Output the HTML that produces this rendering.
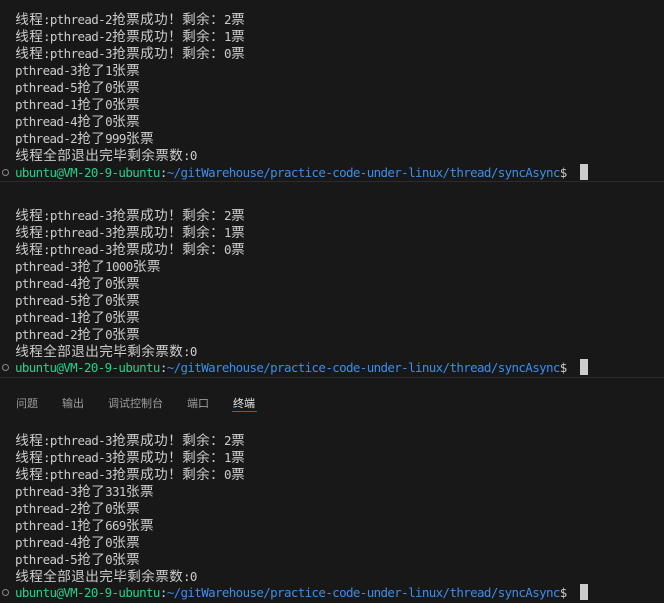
<!DOCTYPE html>
<html><head><meta charset="utf-8"><style>
html,body{margin:0;padding:0;background:#181818;width:664px;height:603px;overflow:hidden}
body{position:relative;font-family:"DejaVu Sans Mono","Noto Sans CJK SC",monospace;font-size:12.5px;letter-spacing:-0.63px;color:#cccccc}
.r{position:absolute;left:15px;height:17px;line-height:17px;white-space:pre}
.c{font-family:"Noto Sans CJK SC",sans-serif;font-size:13.6px;letter-spacing:0;display:inline-block;width:14px;text-align:center;}
.g{color:#23d18b}
.b{color:#3b8eea}
.cur{display:inline-block;width:8px;height:16px;background:#cccccc;vertical-align:-3px;margin-left:13px}
.dot{position:absolute;left:2px;width:5px;height:5px;border:1px solid #888;border-radius:50%}
.sep{position:absolute;left:0;width:664px;height:1px;background:#2b2b2b}
.tab{position:absolute;top:395px;font-family:"Noto Sans CJK SC",sans-serif;font-size:11px;letter-spacing:0;color:#9d9d9d;line-height:16px}
</style></head><body>

<div class="r" style="top:10px"><span class="c">线</span><span class="c">程</span>:pthread-2<span class="c">抢</span><span class="c">票</span><span class="c">成</span><span class="c">功</span><span class="c">！</span><span class="c">剩</span><span class="c">余</span><span class="c">：</span>2<span class="c">票</span></div>
<div class="r" style="top:27px"><span class="c">线</span><span class="c">程</span>:pthread-2<span class="c">抢</span><span class="c">票</span><span class="c">成</span><span class="c">功</span><span class="c">！</span><span class="c">剩</span><span class="c">余</span><span class="c">：</span>1<span class="c">票</span></div>
<div class="r" style="top:44px"><span class="c">线</span><span class="c">程</span>:pthread-3<span class="c">抢</span><span class="c">票</span><span class="c">成</span><span class="c">功</span><span class="c">！</span><span class="c">剩</span><span class="c">余</span><span class="c">：</span>0<span class="c">票</span></div>
<div class="r" style="top:61px">pthread-3<span class="c">抢</span><span class="c">了</span>1<span class="c">张</span><span class="c">票</span></div>
<div class="r" style="top:78px">pthread-5<span class="c">抢</span><span class="c">了</span>0<span class="c">张</span><span class="c">票</span></div>
<div class="r" style="top:95px">pthread-1<span class="c">抢</span><span class="c">了</span>0<span class="c">张</span><span class="c">票</span></div>
<div class="r" style="top:112px">pthread-4<span class="c">抢</span><span class="c">了</span>0<span class="c">张</span><span class="c">票</span></div>
<div class="r" style="top:129px">pthread-2<span class="c">抢</span><span class="c">了</span>999<span class="c">张</span><span class="c">票</span></div>
<div class="r" style="top:146px"><span class="c">线</span><span class="c">程</span><span class="c">全</span><span class="c">部</span><span class="c">退</span><span class="c">出</span><span class="c">完</span><span class="c">毕</span><span class="c">剩</span><span class="c">余</span><span class="c">票</span><span class="c">数</span>:0</div>
<div class="dot" style="top:169px"></div>
<div class="r" style="top:164px"><span class="g">ubuntu@VM-20-9-ubuntu</span>:<span class="b">~/gitWarehouse/practice-code-under-linux/thread/syncAsync</span>$<span class="cur"></span></div>
<div class="sep" style="top:181px"></div>

<div class="r" style="top:206px"><span class="c">线</span><span class="c">程</span>:pthread-3<span class="c">抢</span><span class="c">票</span><span class="c">成</span><span class="c">功</span><span class="c">！</span><span class="c">剩</span><span class="c">余</span><span class="c">：</span>2<span class="c">票</span></div>
<div class="r" style="top:223px"><span class="c">线</span><span class="c">程</span>:pthread-3<span class="c">抢</span><span class="c">票</span><span class="c">成</span><span class="c">功</span><span class="c">！</span><span class="c">剩</span><span class="c">余</span><span class="c">：</span>1<span class="c">票</span></div>
<div class="r" style="top:240px"><span class="c">线</span><span class="c">程</span>:pthread-3<span class="c">抢</span><span class="c">票</span><span class="c">成</span><span class="c">功</span><span class="c">！</span><span class="c">剩</span><span class="c">余</span><span class="c">：</span>0<span class="c">票</span></div>
<div class="r" style="top:257px">pthread-3<span class="c">抢</span><span class="c">了</span>1000<span class="c">张</span><span class="c">票</span></div>
<div class="r" style="top:274px">pthread-4<span class="c">抢</span><span class="c">了</span>0<span class="c">张</span><span class="c">票</span></div>
<div class="r" style="top:291px">pthread-5<span class="c">抢</span><span class="c">了</span>0<span class="c">张</span><span class="c">票</span></div>
<div class="r" style="top:308px">pthread-1<span class="c">抢</span><span class="c">了</span>0<span class="c">张</span><span class="c">票</span></div>
<div class="r" style="top:325px">pthread-2<span class="c">抢</span><span class="c">了</span>0<span class="c">张</span><span class="c">票</span></div>
<div class="r" style="top:342px"><span class="c">线</span><span class="c">程</span><span class="c">全</span><span class="c">部</span><span class="c">退</span><span class="c">出</span><span class="c">完</span><span class="c">毕</span><span class="c">剩</span><span class="c">余</span><span class="c">票</span><span class="c">数</span>:0</div>
<div class="dot" style="top:364px"></div>
<div class="r" style="top:359px"><span class="g">ubuntu@VM-20-9-ubuntu</span>:<span class="b">~/gitWarehouse/practice-code-under-linux/thread/syncAsync</span>$<span class="cur"></span></div>
<div class="sep" style="top:377px"></div>

<div class="tab" style="left:16px">问题</div>
<div class="tab" style="left:62px">输出</div>
<div class="tab" style="left:108px">调试控制台</div>
<div class="tab" style="left:187px">端口</div>
<div class="tab" style="left:233px;color:#e7e7e7">终端</div>
<div style="position:absolute;left:232px;top:411px;width:25px;height:1px;background:#0078d4"></div>

<div class="r" style="top:431px"><span class="c">线</span><span class="c">程</span>:pthread-3<span class="c">抢</span><span class="c">票</span><span class="c">成</span><span class="c">功</span><span class="c">！</span><span class="c">剩</span><span class="c">余</span><span class="c">：</span>2<span class="c">票</span></div>
<div class="r" style="top:448px"><span class="c">线</span><span class="c">程</span>:pthread-3<span class="c">抢</span><span class="c">票</span><span class="c">成</span><span class="c">功</span><span class="c">！</span><span class="c">剩</span><span class="c">余</span><span class="c">：</span>1<span class="c">票</span></div>
<div class="r" style="top:465px"><span class="c">线</span><span class="c">程</span>:pthread-3<span class="c">抢</span><span class="c">票</span><span class="c">成</span><span class="c">功</span><span class="c">！</span><span class="c">剩</span><span class="c">余</span><span class="c">：</span>0<span class="c">票</span></div>
<div class="r" style="top:482px">pthread-3<span class="c">抢</span><span class="c">了</span>331<span class="c">张</span><span class="c">票</span></div>
<div class="r" style="top:499px">pthread-2<span class="c">抢</span><span class="c">了</span>0<span class="c">张</span><span class="c">票</span></div>
<div class="r" style="top:516px">pthread-1<span class="c">抢</span><span class="c">了</span>669<span class="c">张</span><span class="c">票</span></div>
<div class="r" style="top:533px">pthread-4<span class="c">抢</span><span class="c">了</span>0<span class="c">张</span><span class="c">票</span></div>
<div class="r" style="top:550px">pthread-5<span class="c">抢</span><span class="c">了</span>0<span class="c">张</span><span class="c">票</span></div>
<div class="r" style="top:567px"><span class="c">线</span><span class="c">程</span><span class="c">全</span><span class="c">部</span><span class="c">退</span><span class="c">出</span><span class="c">完</span><span class="c">毕</span><span class="c">剩</span><span class="c">余</span><span class="c">票</span><span class="c">数</span>:0</div>
<div class="dot" style="top:589px"></div>
<div class="r" style="top:584px"><span class="g">ubuntu@VM-20-9-ubuntu</span>:<span class="b">~/gitWarehouse/practice-code-under-linux/thread/syncAsync</span>$<span class="cur"></span></div>
</body></html>
